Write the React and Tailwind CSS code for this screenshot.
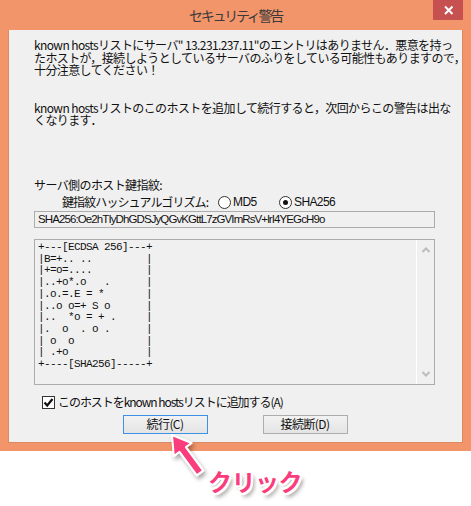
import React from "react";

const art = [
  "+---[ECDSA 256]---+",
  "|B=+.. ..         |",
  "|+=o=....         |",
  "|..+o*.o   .      |",
  "|.o.=.E = *       |",
  "|..o o=+ S o      |",
  "|..  *o = + .     |",
  "|.  o  . o .      |",
  "| o  o            |",
  "| .+o             |",
  "+----[SHA256]-----+",
];

const Radio = ({ checked, label }) => (
  <div className="flex items-center gap-[2px]">
    <span className="w-[13px] h-[13px] rounded-full border border-[#333] bg-white flex items-center justify-center">
      {checked && <span className="w-[5px] h-[5px] rounded-full bg-[#111]" />}
    </span>
    <span className="font-['Liberation_Sans',sans-serif] text-[12px]">{label}</span>
  </div>
);

const Button = ({ children, focused }) => (
  <button
    className={`w-[85px] h-[19px] flex items-center justify-center text-[12px] bg-linear-to-b from-[#f2f2f2] to-[#e4e4e4] border ${
      focused ? "border-[#3c91e6]" : "border-[#adadad]"
    }`}
  >
    {children}
  </button>
);

export default function App() {
  return (
    <div className="relative w-[471px] h-[506px] bg-white overflow-hidden font-['Noto_Sans_CJK_JP',sans-serif] text-[#111]">
      {/* window frame */}
      <div className="bg-[#f2956b] px-[8px] pb-[8px]">
        <div className="relative h-[30px] flex items-center justify-center">
          <span className="text-[14px] text-[#3a3a3a] tracking-[-2.3px]">セキュリティ警告</span>
          <div className="absolute top-0 right-0 w-[30px] h-[20px] bg-[#c75050]">
            <svg width="30" height="20" viewBox="0 0 30 20">
              <path d="M12 6.5 L19.5 14 M19.5 6.5 L12 14" stroke="#fff" strokeWidth="2" />
            </svg>
          </div>
        </div>

        <div className="h-[413px] bg-[#f0f0f0] border-x border-b border-[#d88a62] pl-[25px] pr-[27px] text-[12px] leading-[12.5px] tracking-[-0.6px] flex flex-col">
          <p className="pt-[9px] whitespace-nowrap">
            known hostsリストにサーバ" 13.231.237.11"のエントリはありません．悪意を持っ
            <br />
            たホストが，接続しようとしているサーバのふりをしている可能性もありますので，
            <br />
            十分注意してください！
          </p>
          <p className="mt-[25px] whitespace-nowrap">
            known hostsリストのこのホストを追加して続行すると，次回からこの警告は出な
            <br />
            くなります．
          </p>

          <p className="mt-[52px] whitespace-nowrap">サーバ側のホスト鍵指紋:</p>
          <div className="mt-[4px] h-[14px] flex items-center pl-[28px] whitespace-nowrap">
            <span className="w-[156px] shrink-0 tracking-[-0.9px]">鍵指紋ハッシュアルゴリズム:</span>
            <div className="w-[61px] shrink-0">
              <Radio label="MD5" />
            </div>
            <Radio checked label="SHA256" />
          </div>

          <div className="mt-[2px] h-[17px] border border-[#acacac] flex items-center pl-[3px] font-['Liberation_Sans',sans-serif] text-[11.5px] tracking-[-0.9px] whitespace-nowrap">
            SHA256:Oe2hTIyDhGDSJyQGvKGttL7zGVImRsV+lrI4YEGcH9o
          </div>

          <div className="mt-[11px] h-[146px] border border-[#acacac] flex">
            <pre className="flex-1 pl-[3px] pt-[2px] font-['Liberation_Mono',monospace] text-[11px] leading-[11.7px] tracking-[-0.6px]">
              {art.join("\n")}
            </pre>
            <div className="w-[18px] border-l border-white flex flex-col items-center justify-between py-[7px]">
              <svg width="8" height="6" viewBox="0 0 8 6">
                <path d="M0.5 5 L4 1.5 L7.5 5" stroke="#bdbdbd" strokeWidth="2" fill="none" />
              </svg>
              <svg width="8" height="6" viewBox="0 0 8 6">
                <path d="M0.5 1 L4 4.5 L7.5 1" stroke="#bdbdbd" strokeWidth="2" fill="none" />
              </svg>
            </div>
          </div>

          <div className="mt-[10px] h-[14px] flex items-center gap-[3px] pl-[8px] whitespace-nowrap">
            <span className="w-[13px] h-[13px] border border-[#333] bg-white flex items-center justify-center">
              <svg width="11" height="11" viewBox="0 0 11 11">
                <path d="M1.5 5.5 L4.2 8.5 L9.5 2" stroke="#111" strokeWidth="2.2" fill="none" />
              </svg>
            </span>
            <span className="tracking-[-1.05px]">このホストをknown hostsリストに追加する(A)</span>
          </div>

          <div className="mt-[6px] flex justify-center gap-[55px] pl-[1px]">
            <Button focused>続行(C)</Button>
            <Button>接続断(D)</Button>
          </div>
        </div>
      </div>

      {/* annotation */}
      <div className="pl-[208px] pt-[15px]">
        <span className="text-[24px] font-bold leading-[30px] text-[#fa3c7c] tracking-[-0.5px] [text-shadow:-2px_-2px_0_#fff,2px_-2px_0_#fff,-2px_2px_0_#fff,2px_2px_0_#fff,0_-2px_0_#fff,0_2px_0_#fff,-2px_0_0_#fff,2px_0_0_#fff,3px_4px_4px_rgba(0,0,0,0.45)]">
          クリック
        </span>
      </div>
      <svg
        className="absolute left-0 top-0 pointer-events-none"
        width="471"
        height="506"
        viewBox="0 0 471 506"
      >
        <defs>
          <filter id="sh" x="-20%" y="-20%" width="140%" height="140%">
            <feDropShadow dx="2" dy="3" stdDeviation="2" floodColor="#000" floodOpacity="0.35" />
          </filter>
        </defs>
        <polygon
          points="172,435 191.6,443 185.9,447.1 203.2,470.6 196.8,475.4 179.5,451.9 173.8,456"
          fill="#fa3c7c"
          stroke="#fff"
          strokeWidth="2"
          strokeLinejoin="round"
          filter="url(#sh)"
        />
      </svg>
    </div>
  );
}
